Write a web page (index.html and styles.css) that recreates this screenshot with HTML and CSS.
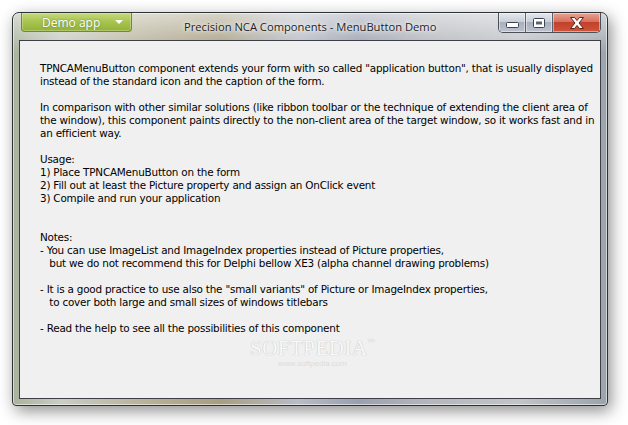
FILE: index.html
```html
<!DOCTYPE html>
<html>
<head>
    <title>Precision NCA Components - MenuButton Demo</title>
    <link rel="stylesheet" href="styles.css">
</head>
<body>
    <div class="window">
        <div class="titlebar">
            <div class="app-button">
                <span class="app-label">Demo app</span>
                <span class="app-arrow"></span>
            </div>
            <div class="caption">Precision NCA Components - MenuButton Demo</div>
            <div class="caption-buttons">
                <div class="cbtn cbtn-min">
                    <svg width="13" height="6" viewBox="0 0 13 6"><rect x="0.5" y="0.5" width="12" height="5" rx="1" fill="#fff" stroke="#3b4250"/></svg>
                </div>
                <div class="cbtn cbtn-max">
                    <svg width="12" height="10" viewBox="0 0 12 10"><rect x="0.5" y="0.5" width="11" height="9" rx="1" fill="#fff" stroke="#3b4250"/><rect x="3" y="3.5" width="6" height="3" fill="#5a6272"/></svg>
                </div>
                <div class="cbtn cbtn-close">
                    <svg width="16" height="12" viewBox="0 0 16 12"><path d="M1.5 0.5h4l2.5 3 2.5-3h4l-4.5 5.5 4.5 5.5h-4l-2.5-3-2.5 3h-4l4.5-5.5z" fill="#fff" stroke="#5a2418" stroke-linejoin="round"/></svg>
                </div>
            </div>
        </div>
        <div class="client">
            <div class="memo">
                <p>TPNCAMenuButton component extends your form with so called "application button", that is usually displayed<br>instead of the standard icon and the caption of the form.</p>
                <p>In comparison with other similar solutions (like ribbon toolbar or the technique of extending the client area of<br>the window), this component paints directly to the non-client area of the target window, so it works fast and in<br>an efficient way.</p>
                <p>Usage:<br>1) Place TPNCAMenuButton on the form<br>2) Fill out at least the Picture property and assign an OnClick event<br>3) Compile and run your application</p>
                <p class="gap">Notes:<br>- You can use ImageList and ImageIndex properties instead of Picture properties,<br>&nbsp;&nbsp;&nbsp;but we do not recommend this for Delphi bellow XE3 (alpha channel drawing problems)</p>
                <p>- It is a good practice to use also the "small variants" of Picture or ImageIndex properties,<br>&nbsp;&nbsp;&nbsp;to cover both large and small sizes of windows titlebars</p>
                <p>- Read the help to see all the possibilities of this component</p>
            </div>
            <div class="watermark">
                <span class="wm-big">SOFTPEDIA<sup>™</sup></span>
                <span class="wm-small">www.softpedia.com</span>
            </div>
        </div>
    </div>
</body>
</html>
```

FILE: styles.css
```css
body {
    margin: 0;
    background-color: #ffffff;
    width: 628px;
    height: 425px;
    overflow: hidden;
}

.window {
    margin: 12px 0 0 12px;
    width: 596px;
    height: 394px;
    box-sizing: border-box;
    border: 1px solid #2e3236;
    border-radius: 7px 7px 4px 4px;
    display: flex;
    flex-direction: column;
    background:
        linear-gradient(to bottom, rgba(255,255,255,0.55) 0%, rgba(255,255,255,0) 40px),
        linear-gradient(to right, #a9b29a 0%, #c9cdc4 8%, #b8b29a 22%, #a79e82 35%, #b8bcc6 48%, #9aa0ae 58%, #b4b6bc 70%, #c2c4c8 85%, #9ba4ac 100%);
    box-shadow: 3px 5px 16px rgba(0,0,0,0.45), inset 0 0 0 1px rgba(255,255,255,0.55);
    position: relative;
}

.titlebar {
    height: 27px;
    display: flex;
    align-items: flex-start;
    position: relative;
}

.app-button {
    margin-left: 8px;
    width: 111px;
    height: 19px;
    box-sizing: border-box;
    border: 1px solid #6f8b2c;
    border-top: none;
    border-radius: 0 0 4px 4px;
    background: linear-gradient(to bottom, #c6da7a 0%, #aac553 45%, #93b236 100%);
    box-shadow: inset 0 0 0 1px rgba(255,255,255,0.25);
    display: flex;
    align-items: center;
    font-family: "Open Sans", "Noto Sans", sans-serif;
    font-size: 12px;
    color: #ffffff;
}

.app-label {
    margin-left: 20px;
    text-shadow: 0 0 2px rgba(60,80,10,0.6);
}

.app-arrow {
    margin-left: 15px;
    width: 0;
    height: 0;
    border-left: 4px solid transparent;
    border-right: 4px solid transparent;
    border-top: 4px solid #ffffff;
}

.caption {
    position: absolute;
    left: 171px;
    top: 6px;
    font-family: "Open Sans", "Noto Sans", sans-serif;
    font-size: 11.2px;
    color: #1e1e1e;
    text-shadow: 0 0 6px rgba(255,255,255,0.9), 0 0 3px rgba(255,255,255,0.9);
}

.caption-buttons {
    margin-left: auto;
    margin-right: 6px;
    display: flex;
    height: 19px;
    border: 1px solid #4a4f58;
    border-top: none;
    border-radius: 0 0 5px 5px;
    overflow: hidden;
}

.cbtn {
    display: flex;
    align-items: center;
    justify-content: center;
    box-shadow: inset 0 0 0 1px rgba(255,255,255,0.45);
}

.cbtn-min,
.cbtn-max {
    width: 26px;
    border-right: 1px solid #5c626c;
    background: linear-gradient(to bottom, #e6e9ee 0%, #c9ced8 45%, #a9b0bd 50%, #bcc3cf 100%);
}

.cbtn-min svg {
    margin-top: 5px;
}

.cbtn-close {
    width: 47px;
    background: linear-gradient(to bottom, #e8a595 0%, #d8705e 45%, #c2412c 50%, #d1543c 100%);
}

.client {
    flex: 1;
    margin: 0 6px 6px 6px;
    border: 1px solid #3c4046;
    background-color: #f0f0f0;
    position: relative;
}

.memo {
    padding: 21px 0 0 20px;
    font-family: "DejaVu Sans", sans-serif;
    font-size: 10.4px;
    line-height: 13px;
    color: #000000;
    letter-spacing: -0.2px;
}

.memo p {
    margin: 0 0 13px 0;
}

.memo p.gap {
    margin-top: 26px;
}

/* faint screenshot watermark, kept just under the last memo line */
.watermark {
    position: absolute;
    left: 230px;
    top: 296px;
    display: flex;
    flex-direction: column;
    align-items: center;
    font-family: "Liberation Serif", serif;
    color: #f9f9f9;
}

.wm-big {
    font-size: 21px;
    line-height: 22px;
    letter-spacing: 0.5px;
    text-shadow: 0 0 1px #c4c4c4, 0 0 1px #c4c4c4;
}

.wm-big sup {
    font-size: 7px;
    vertical-align: top;
    line-height: 10px;
}

.wm-small {
    font-family: "Liberation Sans", sans-serif;
    font-size: 8px;
    line-height: 9px;
    color: #dcdcdc;
}
```
